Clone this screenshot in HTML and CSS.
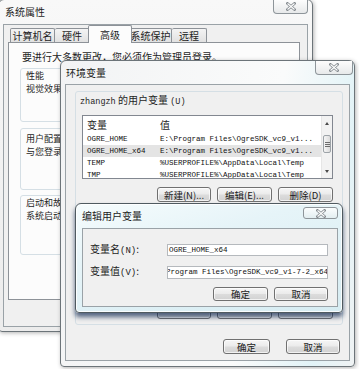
FILE: index.html
```html
<!DOCTYPE html>
<html lang="zh-CN">
<head>
<meta charset="utf-8">
<title>环境变量</title>
<link rel="stylesheet" href="styles.css">
</head>
<body>
<div class="desk">

  <div class="win w1">
    <div class="tbar">
      <span class="ttl">系统属性</span>
      <span class="close"><svg width="10" height="9" viewBox="0 0 10 9"><path d="M1.5 1.5L8.5 7.5M8.5 1.5L1.5 7.5" stroke="#858b90" stroke-width="2.8" stroke-linecap="square" fill="none"/><path d="M1.5 1.5L8.5 7.5M8.5 1.5L1.5 7.5" stroke="#fff" stroke-width="1.1" fill="none"/></svg></span>
    </div>
    <div class="client cl1">
      <div class="tabs">
        <div class="tab t1">计算机名</div>
        <div class="tab t2">硬件</div>
        <div class="tab sel">高级</div>
        <div class="tab t4">系统保护</div>
        <div class="tab t5">远程</div>
      </div>
      <div class="panel">
        <div class="note">要进行大多数更改，您必须作为管理员登录。</div>
        <div class="grp g1">
          <div class="gl">性能</div>
          <div class="gt">视觉效果，处理</div>
        </div>
        <div class="grp g2">
          <div class="gl">用户配置文件</div>
          <div class="gt">与您登录有关</div>
        </div>
        <div class="grp g3">
          <div class="gl">启动和故障恢复</div>
          <div class="gt">系统启动、</div>
        </div>
      </div>
    </div>
  </div>

  <div class="win w2">
    <div class="tbar">
      <span class="ttl">环境变量</span>
      <span class="close"><svg width="10" height="9" viewBox="0 0 10 9"><path d="M1.5 1.5L8.5 7.5M8.5 1.5L1.5 7.5" stroke="#858b90" stroke-width="2.8" stroke-linecap="square" fill="none"/><path d="M1.5 1.5L8.5 7.5M8.5 1.5L1.5 7.5" stroke="#fff" stroke-width="1.1" fill="none"/></svg></span>
    </div>
    <div class="client cl2">
      <div class="vgrp gu">
        <div class="vlabel"><span class="m">zhangzh</span> 的用户变量 <span class="m">(U)</span></div>
        <div class="lv">
          <div class="lv-main">
            <div class="lv-head"><span class="col1">变量</span><span class="col2">值</span></div>
            <div class="row"><span class="col1">OGRE_HOME</span><span class="col2">E:\Program Files\OgreSDK_vc9_v1...</span></div>
            <div class="row on"><span class="col1">OGRE_HOME_x64</span><span class="col2">E:\Program Files\OgreSDK_vc9_v1...</span></div>
            <div class="row"><span class="col1">TEMP</span><span class="col2">%USERPROFILE%\AppData\Local\Temp</span></div>
            <div class="row"><span class="col1">TMP</span><span class="col2">%USERPROFILE%\AppData\Local\Temp</span></div>
          </div>
          <div class="sb">
            <div class="sb-btn"><i class="up"></i></div>
            <div class="sb-track"><div class="thumb"><i class="grip"></i></div></div>
            <div class="sb-btn"><i class="dn"></i></div>
          </div>
        </div>
        <div class="btns">
          <div class="btn b54">新建(N)...</div>
          <div class="btn b55">编辑(E)...</div>
          <div class="btn b55">删除(D)</div>
        </div>
      </div>
      <div class="vgrp gs">
        <div class="vlabel-space"></div>
        <div class="lv lv-s">
          <div class="lv-main"></div>
          <div class="sb"></div>
        </div>
        <div class="btns">
          <div class="btn b54"></div>
          <div class="btn b55"></div>
          <div class="btn b55"></div>
        </div>
      </div>
      <div class="btns foot">
        <div class="btn b47">确定</div>
        <div class="btn b54">取消</div>
      </div>
    </div>
  </div>

  <div class="win w3">
    <div class="tbar">
      <span class="ttl">编辑用户变量</span>
      <span class="close"><svg width="10" height="9" viewBox="0 0 10 9"><path d="M1.5 1.5L8.5 7.5M8.5 1.5L1.5 7.5" stroke="#858b90" stroke-width="2.8" stroke-linecap="square" fill="none"/><path d="M1.5 1.5L8.5 7.5M8.5 1.5L1.5 7.5" stroke="#fff" stroke-width="1.1" fill="none"/></svg></span>
    </div>
    <div class="client cl3">
      <div class="frow r1">
        <span class="flabel">变量名<span class="m2">(N)</span>:</span>
        <div class="inp">OGRE_HOME_x64</div>
      </div>
      <div class="frow r2">
        <span class="flabel">变量值<span class="m2">(V)</span>:</span>
        <div class="inp shifted">Program Files\OgreSDK_vc9_v1-7-2_x64</div>
      </div>
      <div class="btns">
        <div class="btn b55">确定</div>
        <div class="btn b54">取消</div>
      </div>
    </div>
  </div>

</div>
</body>
</html>
```

FILE: styles.css
```css
* { box-sizing: border-box; margin: 0; padding: 0; }

html, body {
  width: 359px;
  height: 369px;
  overflow: hidden;
  background: #fff;
}

body {
  font-family: "Noto Sans CJK SC", "Noto Sans", sans-serif;
  font-size: 10px;
  line-height: 12px;
  color: #1e1e1e;
}

.desk {
  position: relative;
  width: 359px;
  height: 369px;
  overflow: hidden;
  background: #fff;
}

/* ---------- windows ---------- */
.win {
  position: absolute;
  display: flex;
  flex-direction: column;
  border: 1px solid #6c7479;
  border-radius: 6px 6px 4px 4px;
}

.w1 {
  left: -2px;
  top: -1px;
  width: 315px;
  height: 333px;
  background: linear-gradient(180deg, #f8f8f8, #ececec);
  box-shadow: 1px 1px 4px rgba(0, 0, 0, .3);
}

.w2 {
  left: 60px;
  top: 60px;
  width: 295px;
  height: 307px;
  background: linear-gradient(100deg, #f2f3f4 0%, #fafbfb 65%, #e2f3f7 88%, #f0f3f4 100%);
  box-shadow: 1px 1px 4px rgba(0, 0, 0, .3);
}

.w3 {
  left: 75px;
  top: 203px;
  width: 268px;
  height: 110px;
  border-color: #4f5a60;
  background: linear-gradient(165deg, #f6fcfd 0%, #e6f4f8 35%, #d6ecf2 100%);
  box-shadow: 0 4px 5px rgba(15, 40, 80, .7), inset 0 0 0 1px rgba(255, 255, 255, .85);
}

.tbar {
  position: relative;
  flex: none;
  display: flex;
  align-items: center;
}
.w1 .tbar { height: 24px; padding-left: 6px; }
.w2 .tbar { height: 23px; padding-left: 5px; }
.w3 .tbar { height: 24px; padding-left: 6px; }

.ttl { font-size: 10px; color: #1c1c1c; }

.close {
  position: absolute;
  top: 0;
  right: 4px;
  width: 35px;
  height: 14px;
  display: flex;
  align-items: center;
  justify-content: center;
  border: 1px solid #8e959a;
  border-top: none;
  border-radius: 0 0 4px 4px;
  background: linear-gradient(#fdfdfd, #e7e9ea);
}
.w2 .close { right: 1px; width: 38px; }
.w3 .close {
  top: 3px;
  height: 12px;
  border-top: 1px solid #8e959a;
  border-radius: 3px;
  background: linear-gradient(#fbfdfe, #e3eef1);
}

.client {
  flex: 1;
  display: flex;
  flex-direction: column;
  background: #f0f0f0;
  border: 1px solid #9aa2a7;
}

/* ---------- system properties ---------- */
.cl1 { margin: 0 4px 4px 4px; padding: 0 7px 0 4px; }

.tabs {
  display: flex;
  align-items: flex-end;
  height: 18px;
  margin: 0 0 -1px 2px;
  position: relative;
  z-index: 2;
}
.tab {
  height: 14px;
  margin-bottom: 1px;
  border: 1px solid #8d9298;
  border-bottom: none;
  border-left: none;
  border-radius: 2px 2px 0 0;
  background: linear-gradient(#f4f4f4, #e1e1e1);
  display: flex;
  align-items: center;
  justify-content: center;
  font-size: 10px;
}
.t1 { width: 45px; border-left: 1px solid #8d9298; }
.t2 { width: 35px; }
.t4 { width: 42px; }
.t5 { width: 35px; }
.tab.sel {
  width: 44px;
  height: 18px;
  margin: 0 -2px;
  border-left: 1px solid #8d9298;
  background: #fcfcfc;
  position: relative;
  z-index: 3;
}

.panel {
  height: 258px;
  border: 1px solid #8d9298;
  background: #fcfcfc;
  display: flex;
  flex-direction: column;
}
.note { margin-top: 8px; padding-left: 13px; white-space: nowrap; }

.grp {
  margin: 0 7px 0 11px;
  border: 1px solid #d5dfe5;
  border-radius: 3px;
  padding-left: 5px;
  white-space: nowrap;
  overflow: hidden;
  font-size: 9px;
  line-height: 13px;
}
.g1 { margin-top: 5px; height: 54px; }
.g2 { margin-top: 6px; height: 62px; padding-top: 3px; }
.g3 { margin-top: 5px; height: 60px; }

/* ---------- environment variables ---------- */
.cl2 { margin: 0 4px 5px 4px; }

.vgrp {
  border: 1px solid #d5dfe5;
  border-radius: 3px;
  margin: 0 6px 0 9px;
  padding: 2px 9px 5px 6px;
  display: flex;
  flex-direction: column;
}
.gu { margin-top: 6px; }
.gs { margin-top: 4px; }

.vlabel { margin-left: -2px; white-space: nowrap; }
.vlabel-space { height: 12px; }
.m { font-family: "Liberation Mono", monospace; font-size: 8.5px; }
.m2 { font-family: "Liberation Mono", monospace; font-size: 9px; }

.lv {
  margin-top: 7px;
  height: 64px;
  display: flex;
  border: 1px solid #828790;
  background: #fff;
}
.lv-s { height: 62px; }
.lv-main {
  flex: 1;
  display: flex;
  flex-direction: column;
  overflow: hidden;
}
.lv-head {
  flex: none;
  height: 17px;
  display: flex;
  align-items: center;
  font-size: 10px;
}
.col1 { width: 75px; flex: none; padding-left: 4px; }
.col2 { padding-left: 2px; }

.row {
  flex: none;
  height: 12px;
  display: flex;
  align-items: center;
  font-family: "Liberation Mono", monospace;
  font-size: 7.5px;
  white-space: nowrap;
  color: #111;
}
.row.on { background: #e4e4e4; }

.sb {
  width: 11px;
  flex: none;
  display: flex;
  flex-direction: column;
  background: #f2f2f2;
  border-left: 1px solid #e6e6e6;
}
.sb-btn {
  flex: none;
  height: 14px;
  display: flex;
  align-items: center;
  justify-content: center;
}
.sb-track {
  flex: 1;
  padding: 5px 1px 0 1px;
}
.thumb {
  height: 18px;
  border: 1px solid #9da3a8;
  border-radius: 2px;
  background: linear-gradient(90deg, #f5f5f5, #dcdcdc);
  display: flex;
  align-items: center;
  justify-content: center;
}
.grip {
  display: block;
  width: 5px;
  height: 5px;
  background: repeating-linear-gradient(#6d6d6d 0 1px, transparent 1px 2px);
}
.up, .dn {
  display: block;
  width: 0;
  height: 0;
  border-left: 2.5px solid transparent;
  border-right: 2.5px solid transparent;
}
.up { border-bottom: 3px solid #4a4a4a; }
.dn { border-top: 3px solid #4a4a4a; }

.btns {
  display: flex;
  justify-content: flex-end;
  gap: 6px;
  margin-top: 8px;
}
.btn {
  height: 15px;
  display: flex;
  align-items: center;
  justify-content: center;
  border: 1px solid #707070;
  border-radius: 3px;
  background: linear-gradient(#f6f6f6 0%, #ebebeb 48%, #dcdcdc 52%, #d2d2d2 100%);
  box-shadow: inset 0 0 0 1px rgba(255, 255, 255, .7);
  font-size: 9.5px;
  white-space: nowrap;
  color: #1a1a1a;
}
.b47 { width: 47px; }
.b54 { width: 54px; }
.b55 { width: 55px; }

.foot { margin-top: 14px; margin-right: 9px; gap: 16px; }

/* ---------- edit user variable ---------- */
.cl3 { margin: 0 4px 5px 6px; padding: 0 9px 0 7px; }

.frow { display: flex; align-items: center; }
.r1 { margin-top: 14px; }
.r2 { margin-top: 8px; }
.flabel { width: 77px; flex: none; white-space: nowrap; }

.inp {
  width: 163px;
  height: 12px;
  border: 1px solid #b5b9bd;
  background: #fff;
  font-family: "Liberation Mono", monospace;
  font-size: 7.5px;
  line-height: 10px;
  padding-left: 1px;
  white-space: nowrap;
  overflow: hidden;
  color: #111;
}
.r2 .inp { height: 13px; line-height: 11px; }
.shifted { text-indent: -3px; }

.cl3 .btns { margin-top: 8px; }
.cl3 .btn { height: 14px; }
```
